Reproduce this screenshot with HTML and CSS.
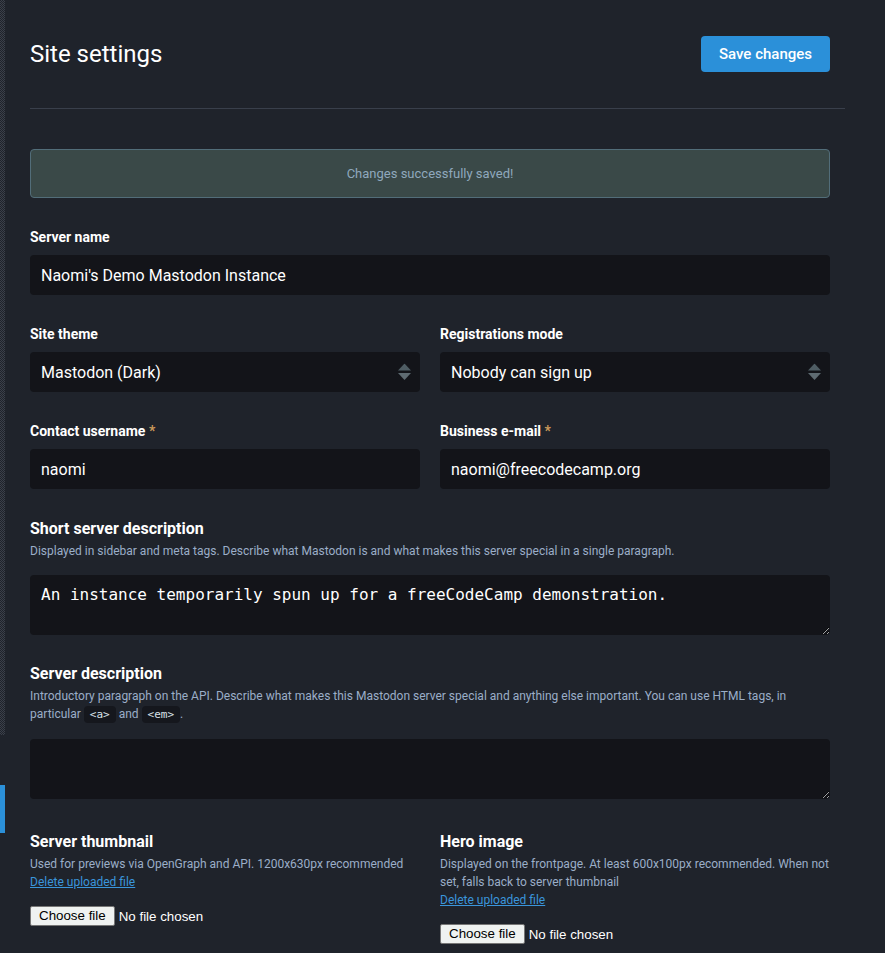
FILE: index.html
```html
<!DOCTYPE html>
<html lang="en">
<head>
<meta charset="utf-8">
<title>Site settings</title>
<link rel="stylesheet" href="styles.css">
</head>
<body>
<div class="layout">
  <aside class="sidebar-edge" aria-hidden="true">
    <div class="edge-scroll"></div>
    <div class="edge-active"></div>
  </aside>
  <main class="content">
    <header class="content-heading">
      <h1 class="title">Site settings</h1>
      <button class="btn" type="submit" form="settings">Save changes</button>
    </header>

    <div class="flash">Changes successfully saved!</div>

    <form id="settings" class="form">
      <div class="field">
        <label class="label" for="f-name">Server name</label>
        <input class="input" id="f-name" type="text" value="Naomi's Demo Mastodon Instance">
      </div>

      <div class="row">
        <div class="field">
          <label class="label" for="f-theme">Site theme</label>
          <div class="select-wrap">
            <select class="input select" id="f-theme"><option>Mastodon (Dark)</option></select>
            <svg class="select-arrows" width="13" height="17" viewBox="0 0 13 17"><polygon points="6.5,0 13,7 0,7" fill="#4f5d64"/><polygon points="0,9.5 13,9.5 6.5,16.5" fill="#5f6b72"/></svg>
          </div>
        </div>
        <div class="field">
          <label class="label" for="f-reg">Registrations mode</label>
          <div class="select-wrap">
            <select class="input select" id="f-reg"><option>Nobody can sign up</option></select>
            <svg class="select-arrows" width="13" height="17" viewBox="0 0 13 17"><polygon points="6.5,0 13,7 0,7" fill="#4f5d64"/><polygon points="0,9.5 13,9.5 6.5,16.5" fill="#5f6b72"/></svg>
          </div>
        </div>
      </div>

      <div class="row">
        <div class="field">
          <label class="label" for="f-user">Contact username <abbr class="req" title="required">*</abbr></label>
          <input class="input" id="f-user" type="text" value="naomi">
        </div>
        <div class="field">
          <label class="label" for="f-mail">Business e-mail <abbr class="req" title="required">*</abbr></label>
          <input class="input" id="f-mail" type="email" value="naomi@freecodecamp.org">
        </div>
      </div>

      <div class="field">
        <label class="heading" for="f-short">Short server description</label>
        <p class="hint">Displayed in sidebar and meta tags. Describe what Mastodon is and what makes this server special in a single paragraph.</p>
        <textarea class="textarea" id="f-short">An instance temporarily spun up for a freeCodeCamp demonstration.</textarea>
      </div>

      <div class="field field-tight">
        <label class="heading" for="f-desc">Server description</label>
        <p class="hint">Introductory paragraph on the API. Describe what makes this Mastodon server special and anything else important. You can use HTML tags, in particular <code class="code">&lt;a&gt;</code> and <code class="code">&lt;em&gt;</code>.</p>
        <textarea class="textarea" id="f-desc"></textarea>
      </div>

      <div class="row row-files">
        <div class="field">
          <div class="heading">Server thumbnail</div>
          <p class="hint hint-file">Used for previews via OpenGraph and API. 1200x630px recommended</p>
          <a class="link" href="#">Delete uploaded file</a>
          <label class="file">
            <input class="file-input" type="file">
            <span class="file-btn">Choose file</span>
            <span class="file-name">No file chosen</span>
          </label>
        </div>
        <div class="field">
          <div class="heading">Hero image</div>
          <p class="hint hint-file">Displayed on the frontpage. At least 600x100px recommended. When not set, falls back to server thumbnail</p>
          <a class="link" href="#">Delete uploaded file</a>
          <label class="file">
            <input class="file-input" type="file">
            <span class="file-btn">Choose file</span>
            <span class="file-name">No file chosen</span>
          </label>
        </div>
      </div>
    </form>
  </main>
</div>
</body>
</html>
```

FILE: styles.css
```css
* { box-sizing: border-box; }

html, body {
  margin: 0;
  background: #1f232b;
}

body {
  font-family: Roboto, "Noto Sans", "Liberation Sans", sans-serif;
  color: #ffffff;
}

.layout {
  display: flex;
  min-height: 953px;
}

.sidebar-edge {
  width: 5px;
  flex: none;
  display: flex;
  flex-direction: column;
}

.edge-scroll {
  height: 735px;
  background: repeating-conic-gradient(#3b404a 0 25%, transparent 0 50%) 0 0 / 2px 2px;
}

.edge-active {
  margin-top: 50px;
  height: 48px;
  background: #2b90d9;
}

.content {
  flex: 1;
  padding: 0 40px 40px 25px;
}

.content-heading {
  display: flex;
  justify-content: space-between;
  align-items: center;
  padding: 36px 15px 36px 0;
  border-bottom: 1px solid #393f4b;
}

.title {
  margin: 0;
  font-size: 24px;
  font-weight: 400;
  line-height: 36px;
  color: #ffffff;
}

.btn {
  height: 36px;
  padding: 0 18px;
  border: 0;
  border-radius: 4px;
  background: #2b90d9;
  color: #ffffff;
  font-family: Roboto, sans-serif;
  font-size: 15px;
  font-weight: 500;
  cursor: pointer;
}

.flash {
  width: 800px;
  margin-top: 40px;
  padding: 15px;
  border: 1px solid #526d79;
  border-radius: 4px;
  background: #3a4948;
  color: #8fa8bd;
  font-size: 13px;
  line-height: 17px;
  text-align: center;
}

.form {
  width: 800px;
  margin-top: 30px;
  display: flex;
  flex-direction: column;
  gap: 30px;
}

.field {
  display: flex;
  flex-direction: column;
  min-width: 0;
}

.field-tight {
  margin-top: -1px;
}

.row {
  display: grid;
  grid-template-columns: 1fr 1fr;
  column-gap: 20px;
}

.row-files {
  margin-top: 3px;
}

.label {
  display: block;
  font-size: 14px;
  font-weight: 700;
  line-height: 18px;
  margin-bottom: 9px;
  color: #ffffff;
}

.req {
  text-decoration: none;
  border: 0;
  color: #c9995a;
}

.input {
  display: block;
  width: 100%;
  height: 40px;
  padding: 0 11px;
  border: 0;
  border-radius: 4px;
  background: #131419;
  color: #ffffff;
  font-family: Roboto, sans-serif;
  font-size: 16px;
  outline: none;
}

.select-wrap {
  position: relative;
}

.select {
  appearance: none;
  -webkit-appearance: none;
  padding-right: 30px;
}

.select-arrows {
  position: absolute;
  right: 9px;
  top: 50%;
  transform: translateY(-50%);
  pointer-events: none;
}

.heading {
  display: block;
  font-size: 16px;
  font-weight: 700;
  line-height: 20px;
  margin-bottom: 3px;
  color: #ffffff;
}

.hint {
  margin: 0 0 15px;
  font-size: 12px;
  line-height: 18px;
  color: #9baec8;
}

.hint-file {
  margin-bottom: 0;
}

.code {
  padding: 2px 6px;
  border-radius: 4px;
  background: #15171d;
  color: #d9e1e8;
  font-family: "DejaVu Sans Mono", "Liberation Mono", monospace;
  font-size: 11px;
}

.textarea {
  display: block;
  width: 100%;
  height: 60px;
  padding: 10px 11px;
  border: 0;
  border-radius: 4px;
  background: #131419;
  color: #ffffff;
  font-family: "DejaVu Sans Mono", "Liberation Mono", monospace;
  font-size: 16px;
  line-height: 20px;
  resize: vertical;
  outline: none;
}

.link {
  display: block;
  align-self: flex-start;
  font-size: 12px;
  line-height: 18px;
  color: #3a95db;
  text-decoration: underline;
}

.file {
  display: flex;
  align-items: center;
  margin-top: 15px;
  font-family: "Liberation Sans", Arial, sans-serif;
  font-size: 13.333px;
  cursor: pointer;
}

.file-input {
  position: absolute;
  width: 1px;
  height: 1px;
  opacity: 0;
  overflow: hidden;
}

.file-btn {
  display: inline-block;
  height: 20px;
  padding: 1px 8px;
  line-height: 16px;
  border: 1px solid #767676;
  border-radius: 2px;
  background: #eff2f1;
  color: #000000;
}

.file-name {
  margin-left: 4px;
  color: #ffffff;
}
```
